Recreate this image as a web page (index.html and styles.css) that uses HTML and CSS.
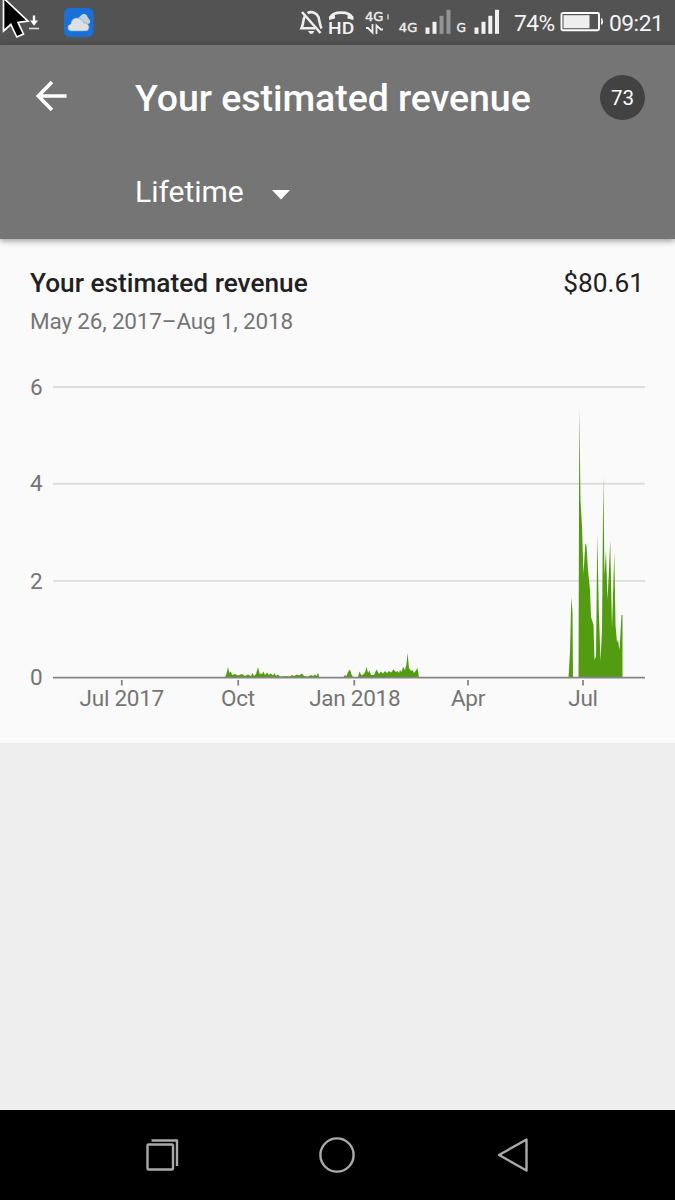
FILE: index.html
```
<!DOCTYPE html>
<html lang="en">
<head>
    <meta charset="UTF-8">
    <meta name="viewport" content="width=device-width, initial-scale=1.0">
    <link rel="stylesheet" href="styles.css">
    <title>Your estimated revenue</title>
</head>
<body>
    <div class="statusbar">
        <svg class="status-left" width="110" height="45" viewBox="0 0 110 45">
            <!-- download -->
            <path d="M29 28.5H39" stroke="#ddd" stroke-width="1.6"/>
            <path d="M34 15.5V22" stroke="#fff" stroke-width="2.4"/>
            <path d="M30 20.5H38L34 25.8Z" fill="#fff"/>
            <!-- cursor -->
            <path d="M3.5 -2V31L10.8 24.5L16.8 37L23.5 34L18 22.4L28 21.2Z" fill="#000" stroke="#fff" stroke-width="1.7"/>
            <!-- cloud app -->
            <rect x="64" y="8" width="29.5" height="29" rx="5.5" fill="#1b70d8"/>
            <path d="M77 19L81 15.500C83.500 13 87 14 87.500 17L90 20.500C91 23 88 25 86 24Z" fill="#c3d0df"/>
            <path d="M71.500 31C66.500 31 67 24.500 71 24C71 19.500 75 17 79 18.500C82 19 83.500 21 84 23C89.500 22.500 91 30 86 31Z" fill="#dfe0e2" stroke="#6c9fdb" stroke-width="0.600"/>
        </svg>
        <svg class="status-icons" width="214" height="45" viewBox="290 0 214 45">
            <!-- muted bell -->
            <g fill="none" stroke="#eee" stroke-width="2.6">
                <path d="M305 16C303 19 303.500 24 301.500 28.300H315"/>
                <path d="M307.500 13.200C311 11 316.500 12.500 318.500 17C319.500 20.500 319.500 24 321.500 28.500"/>
                <path d="M302 12L320.500 33"/>
            </g>
            <path d="M308 31H314.500L312.500 33.800H310Z" fill="#eee"/>
            <!-- HD call -->
            <path d="M330.500 17.500C333 11 349.500 11 352 17.500" fill="none" stroke="#eee" stroke-width="2.800"/>
            <path d="M329 16.500L335 15V18.500L329 20ZM347.500 15L353.500 16.500V20L347.500 18.500Z" fill="#eee"/>
            <text class="hd" x="328" y="33.700" textLength="26.200" lengthAdjust="spacingAndGlyphs">HD</text>
            <text class="net" x="365" y="20.700" textLength="18.500" lengthAdjust="spacingAndGlyphs">4G</text>
            <path d="M388 14.300V19.500" stroke="#ddd" stroke-width="1.3"/>
            <path d="M366 28H368L372.500 32.500V24M376.500 34V25.500L381 29.500H383" fill="none" stroke="#eee" stroke-width="1.800"/>
            <text class="net" x="398.800" y="32" textLength="18.500" lengthAdjust="spacingAndGlyphs">4G</text>
            <g fill="#f2f2f2">
                <rect x="425.500" y="27.500" width="4" height="6.300"/>
                <rect x="432.500" y="21.800" width="4" height="12"/>
                <rect x="439.500" y="15.800" width="4" height="18" fill="#949494"/>
                <rect x="446.500" y="9.800" width="4" height="24" fill="#949494"/>
                <rect x="474.500" y="27.500" width="4" height="6.300"/>
                <rect x="481.500" y="21.800" width="4" height="12"/>
                <rect x="488.300" y="15.800" width="4" height="18"/>
                <rect x="495" y="9.800" width="4" height="24"/>
            </g>
            <text class="net" x="456.500" y="32" textLength="9.500" lengthAdjust="spacingAndGlyphs">G</text>
        </svg>
        <span class="percent">74%</span>
        <svg class="battery" width="44" height="20" viewBox="0 0 44 20">
            <rect x="1.500" y="1" width="37.500" height="17.300" rx="1.500" fill="none" stroke="#fff" stroke-width="1.900"/>
            <rect x="3.500" y="3.200" width="26" height="13" fill="#eee"/>
            <path d="M41.500 6.500Q43 9.500 41.500 12.500" fill="none" stroke="#fff" stroke-width="1.500"/>
        </svg>
        <span class="clock">09:21</span>
    </div>

    <header class="appbar">
        <div class="title-row">
            <svg class="back" width="32" height="32" viewBox="0 0 32 32">
                <path d="M30.500 16H3M16 2L2.300 16L16 30" fill="none" stroke="#fff" stroke-width="3.600"/>
            </svg>
            <h1 class="title">Your estimated revenue</h1>
            <span class="avatar">73</span>
        </div>
        <div class="period">
            <span>Lifetime</span>
            <svg width="18" height="10" viewBox="0 0 18 10">
                <path d="M0 0H18L9 9.500Z" fill="#fff"/>
            </svg>
        </div>
    </header>

    <main class="card">
        <div class="card-head">
            <h2 class="card-title">Your estimated revenue</h2>
            <span class="amount">$80.61</span>
        </div>
        <p class="dates">May 26, 2017–Aug 1, 2018</p>
        <svg class="chart" width="675" height="370" viewBox="0 360 675 370">
            <g class="grid">
                <path d="M53 387H645M53 483.700H645M53 580.900H645"/>
            </g>
            <g class="area">
                <path d="M225 677.500L227 672L228 667L229.500 673L231 671.500L232 675L235 674L238 675.500L242 674L245 676L248 674.500L251 676L252.500 673L254 676L256 674L258 667L259.500 673.500L262 674L263.500 671.500L265 675L267 672.500L269 675L271 673.500L273 675.500L274.500 673L276 676L278 674.500L280 676.500L286 676L290 676.500L292 675L294 676L297 674.500L299 675.500L302 673.500L304 676L308 676.500L311 675L313 676L315 674.500L316.500 676L318 673L319.500 677.500Z"/>
                <path d="M343 677.500L345 675L346.500 676L348 672L350 669.500L351.500 674.500L353 677L358 677L359.500 671.500L361.500 675.500L364 674L365.500 671L366.500 666.500L368 673L369.500 670.500L371 675L374 675L376.500 669.500L379 674L381 671.500L383 673.500L385 671L387 673L389 671L391 672.500L393.500 669.500L396 672L397.500 671L399 673L400 670L401.500 672L403 667L405 670L406.500 664L407.500 653L409 668L411 671L412.500 670L414 673L415.500 671L417.500 668L419 677.500Z"/>
                <path d="M568.500 677.500L570 652L571.300 597L572.500 612L573 677.500Z"/>
                <path d="M578.500 677.500L579.300 408L580.500 500L582 526L583.500 574L585.300 543L586.500 546L588 570L590 590L591 617L593.500 625L594.500 660L596 656L597.300 534L598.800 610L600.500 661L602 630L603.300 476L604.500 575L606 551L607.500 600L609 570L610.200 540L612 629L614.300 552L615.500 625L617 642L618 640L619.500 650L621.500 615L622.500 615V677.500Z"/>
            </g>
            <path class="axis" d="M53 677.700H645"/>
            <path class="ticks" d="M121.800 680V685.500M238.200 680V685.500M354.300 680V685.500M468 680V685.500M583 680V685.500"/>
            <g class="labels">
                <text x="30" y="394.500">6</text>
                <text x="30" y="491">4</text>
                <text x="30" y="588.500">2</text>
                <text x="30" y="685">0</text>
            </g>
            <g class="labels months">
                <text x="121.800" y="706">Jul 2017</text>
                <text x="238" y="706">Oct</text>
                <text x="354.800" y="706">Jan 2018</text>
                <text x="468" y="706">Apr</text>
                <text x="583" y="706">Jul</text>
            </g>
        </svg>
    </main>

    <nav class="navbar">
        <svg width="34" height="34" viewBox="0 0 34 34">
            <rect x="2.500" y="6.500" width="25.500" height="25" rx="1"/>
            <path d="M6.500 2.500H32V28"/>
        </svg>
        <svg class="home" width="38" height="38" viewBox="0 0 38 38">
            <circle cx="19" cy="19" r="16.600"/>
        </svg>
        <svg width="34" height="36" viewBox="0 0 34 36">
            <path d="M3 18L30.500 2.500V33.500Z"/>
        </svg>
    </nav>
</body>
</html>
```
FILE: styles.css
```
* {
    box-sizing: border-box;
    margin: 0;
    padding: 0;
}

body {
    width: 675px;
    height: 1200px;
    display: flex;
    flex-direction: column;
    background-color: #eee;
    font-family: Roboto, sans-serif;
    overflow: hidden;
}

svg {
    display: block;
    flex: none;
}

.statusbar {
    height: 45px;
    flex: none;
    display: flex;
    align-items: center;
    background-color: #535353;
    color: #f4f4f4;
    font-size: 22.8px;
    letter-spacing: -0.5px;
}

.status-left {
    margin-right: 180px;
}

.percent {
    width: 46px;
    padding: 2px 0 0 10px;
    margin-right: 10px;
    white-space: nowrap;
}

.battery {
    margin-top: -1px;
}

.clock {
    margin-left: 5px;
    padding-top: 2px;
}

.hd {
    font-size: 16.8px;
    font-weight: 500;
    letter-spacing: 0;
    fill: #f2f2f2;
}

.net {
    font-family: "DejaVu Sans", sans-serif;
    font-size: 12.5px;
    letter-spacing: 0;
    fill: #eee;
    stroke: #eee;
    stroke-width: 0.4;
}

.appbar {
    height: 194px;
    flex: none;
    padding: 29px 30px 0 36px;
    background-color: #757575;
    color: #fff;
    box-shadow: 0 2px 6px rgba(0, 0, 0, 0.38);
    z-index: 1;
}

.title-row {
    display: flex;
    align-items: center;
    height: 46px;
}

.back {
    margin-top: -3px;
}

.title {
    margin-left: 67px;
    padding-top: 2px;
    font-size: 37.5px;
    font-weight: 500;
    line-height: 44px;
    letter-spacing: -0.05px;
    white-space: nowrap;
}

.avatar {
    width: 45px;
    height: 45px;
    margin-left: auto;
    border-radius: 50%;
    background-color: #424242;
    font-size: 20.6px;
    line-height: 47px;
    text-align: center;
}

.period {
    display: flex;
    align-items: center;
    gap: 28px;
    margin: 54px 0 0 99px;
    font-size: 30px;
    line-height: 36px;
}

.period svg {
    margin-top: 6px;
}

.card {
    height: 504px;
    flex: none;
    padding-top: 28px;
    background-color: #fafafa;
}

.card-head {
    display: flex;
    justify-content: space-between;
    padding: 0 31px 0 30px;
    color: #212121;
    font-size: 26.25px;
    line-height: 32px;
}

.card-title {
    font-size: 26.25px;
    font-weight: 500;
}

.dates {
    padding: 8px 0 0 30px;
    color: #757575;
    font-size: 22.5px;
    line-height: 28px;
    letter-spacing: -0.17px;
}

.chart {
    margin-top: 25px;
}

.grid {
    stroke: #ddd;
    stroke-width: 1.9;
}

.area {
    fill: #539b10;
}

.axis,
.ticks {
    stroke: #858585;
    stroke-width: 1.8;
}

.labels {
    fill: #757575;
    font-size: 22.5px;
}

.months {
    text-anchor: middle;
    letter-spacing: -0.25px;
}

.navbar {
    height: 90px;
    flex: none;
    display: flex;
    align-items: center;
    justify-content: space-between;
    margin-top: auto;
    padding: 0 145px;
    background-color: #000;
}

.navbar svg {
    fill: none;
    stroke: #aaa;
    stroke-width: 2.4;
    stroke-linejoin: round;
}

.navbar .home {
    margin-right: 2px;
}
```
